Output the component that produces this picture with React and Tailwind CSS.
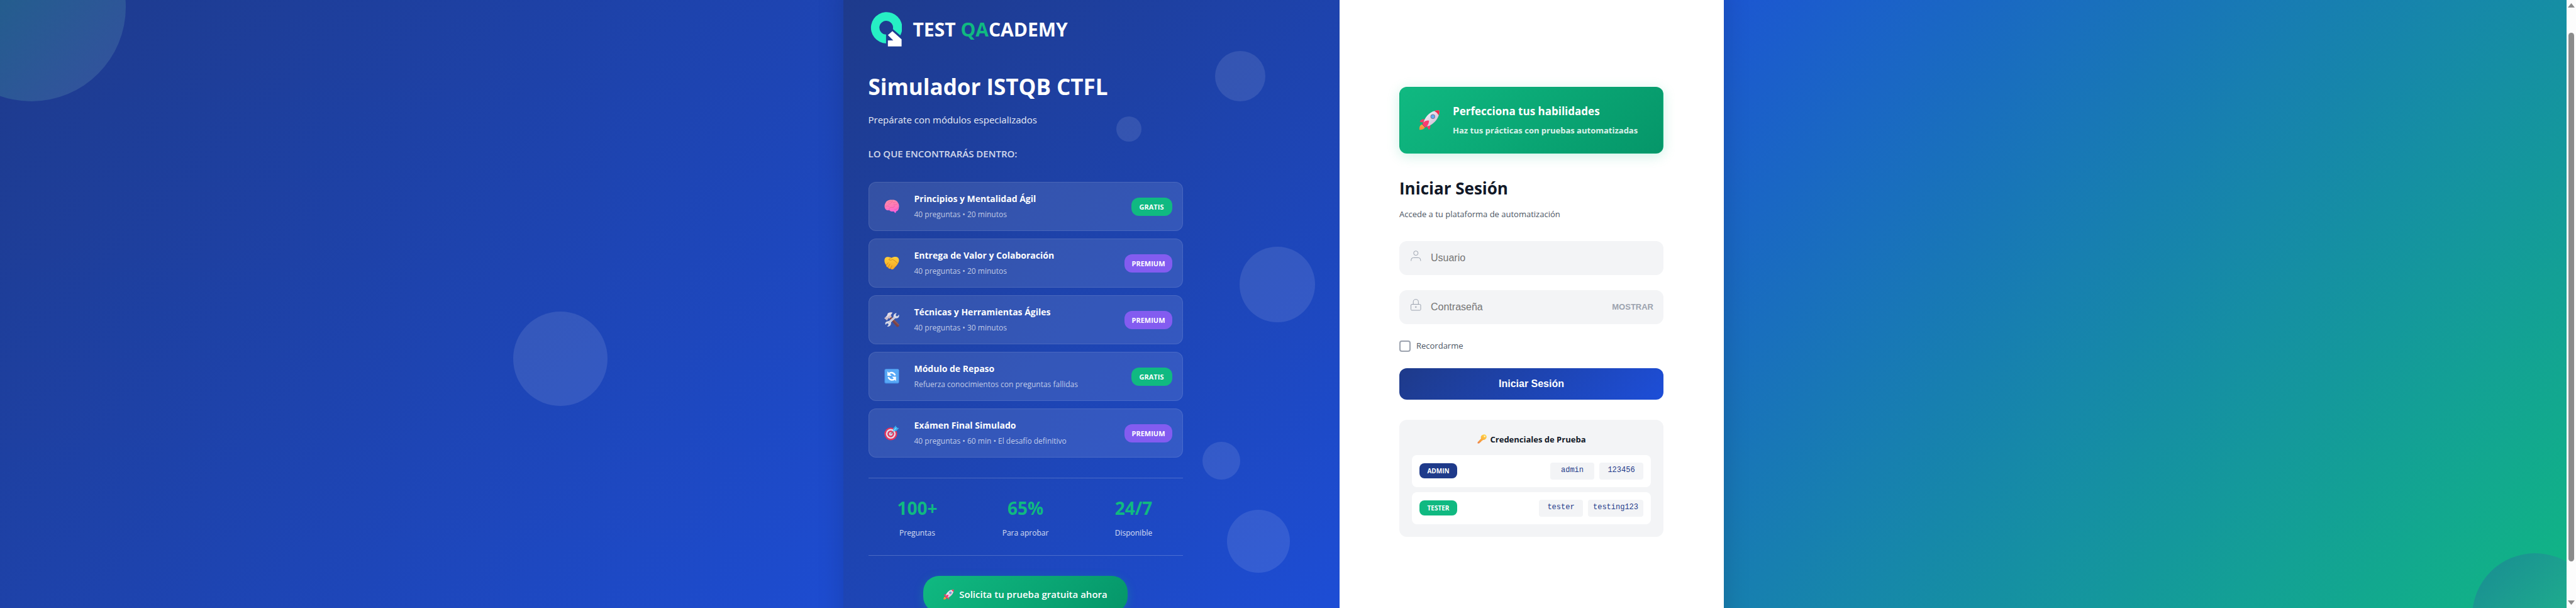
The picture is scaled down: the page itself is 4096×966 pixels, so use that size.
function Logo() {
  return (
    <svg viewBox="29 28 187 207" className="h-[55px] w-[50px]" role="img" aria-label="Test QAcademy">
      <path d="M122 216A93.500 93.500 0 1 1 207 168L163 131A41 41 0 1 0 122 163Z" fill="#26efc4" />
      <path d="M160 143L133 166L165 198H133V234H215V192Z" fill="#fff" />
    </svg>
  );
}

function Rocket({ className }) {
  return (
    <svg viewBox="62 60 126 124" className={className} aria-hidden="true">
      <defs>
        <linearGradient id="rocketBody" x1="0" y1="0" x2="1" y2="1">
          <stop offset="0.2" stopColor="#f1edf5" />
          <stop offset="1" stopColor="#c9b4cf" />
        </linearGradient>
        <linearGradient id="rocketFlame" x1="0" y1="0" x2="0" y2="1">
          <stop offset="0" stopColor="#ffa63c" />
          <stop offset="1" stopColor="#f58a3c" />
        </linearGradient>
      </defs>
      <path d="M82 148C70 152 62 162 65 181C80 182 92 178 99 164Z" fill="url(#rocketFlame)" />
      <path d="M96 118C84 116 72 122 66 132L86 139Z" fill="#f23a66" />
      <path d="M129 150C132 162 130 174 122 182L110 162Z" fill="#f2386a" />
      <path d="M80 147L101 169L108 160L90 140Z" fill="#4a3f8f" />
      <path d="M88 141C96 108 122 76 156 68C172 64 184 64 184 68C186 98 164 134 133 152C124 158 114 160 106 160Z" fill="url(#rocketBody)" />
      <path d="M153 69C168 64 183 62 184 68C185 78 183 86 179 95C174 82 166 74 153 69Z" fill="#ee2a4a" />
      <path d="M83 147C88 132 104 124 122 126C123 140 114 158 102 168Z" fill="#fb3a70" />
      <circle cx="145" cy="102" r="14" fill="#7d7f9c" />
      <circle cx="145" cy="102" r="9.500" fill="#58aefc" />
    </svg>
  );
}

function Key({ className }) {
  return (
    <svg viewBox="0 0 40 40" className={className} aria-hidden="true">
      <defs>
        <linearGradient id="keyGold" x1="0.800" y1="0" x2="0.200" y2="1">
          <stop offset="0" stopColor="#ffd84a" />
          <stop offset="0.500" stopColor="#fbb03c" />
          <stop offset="1" stopColor="#f0874a" />
        </linearGradient>
      </defs>
      <path
        fillRule="evenodd"
        d="M26 1C35 -1 41 6 39 14C37 21 30 25 24 24L20 28L17 29L15 33L12 34L9 38L2 39L1 34L16 18C13 10 17 2 26 1ZM31 6A3 3 0 1 0 31.010 6Z"
        fill="url(#keyGold)"
      />
    </svg>
  );
}

function Brain() {
  return (
    <svg viewBox="50 21 90 90" className="size-6" aria-hidden="true">
      <defs>
        <linearGradient id="brainPink" x1="0.300" y1="0" x2="0.500" y2="1">
          <stop offset="0" stopColor="#ff8fa6" />
          <stop offset="0.600" stopColor="#ff74bd" />
          <stop offset="1" stopColor="#f85fe0" />
        </linearGradient>
      </defs>
      <path
        d="M58 45C62 33 78 26 95 27C112 25 127 33 132 44C139 52 139 66 137 74C136 85 130 93 121 95L118 105L112 103L108 96C96 97 84 97 80 88C70 92 58 86 56 79C50 72 51 52 58 45Z"
        fill="url(#brainPink)"
      />
      <path
        d="M58 66C68 60 74 62 80 68M72 44C78 34 88 34 94 40M98 32C96 44 108 46 116 42M106 54C116 58 126 56 131 48M80 88C76 78 84 70 96 72C106 74 112 68 110 62M112 84C120 86 130 80 132 72M94 40C90 50 82 54 76 52"
        fill="none"
        stroke="#e0559a"
        strokeWidth="2"
        strokeLinecap="round"
      />
    </svg>
  );
}

function Handshake() {
  return (
    <svg viewBox="50 361 90 90" className="size-6" aria-hidden="true">
      <defs>
        <linearGradient id="handGold" x1="0.500" y1="0" x2="0.500" y2="1">
          <stop offset="0" stopColor="#ffcf3a" />
          <stop offset="1" stopColor="#f5a623" />
        </linearGradient>
      </defs>
      <path
        d="M54 378C58 369 70 369 78 370C86 370 92 374 96 374C104 368 126 365 134 376C141 386 138 400 132 408C126 420 116 428 108 438C102 446 92 445 88 439C80 441 74 437 73 431C66 431 61 426 62 419C52 408 48 390 54 378Z"
        fill="url(#handGold)"
      />
      <path
        d="M96 374C86 376 76 382 78 386C84 390 94 388 100 385C110 388 120 398 128 406M62 418L74 404M73 430L84 412M88 438L96 422"
        fill="none"
        stroke="#c97a14"
        strokeWidth="3"
        strokeLinecap="round"
      />
    </svg>
  );
}

function Tools() {
  return (
    <svg viewBox="48 691 90 90" className="size-6" aria-hidden="true">
      <path d="M78 727L90 718L137 766C138 774 132 780 124 779Z" fill="#7a4248" />
      <path d="M84 722L90 718L137 766L134 771Z" fill="#95584f" />
      <path d="M70 698C78 692 90 692 97 694L88 708L92 718L78 729L74 726L64 741L48 727C52 722 58 718 64 714Z" fill="#c9bccb" />
      <path d="M70 698C78 692 90 692 97 694L88 704L64 722L56 719L64 713Z" fill="#e3dbe6" />
      <path
        d="M122 697L116 708L120 715L128 714L135 705C140 718 132 728 118 728C114 728 112 728 110 730L88 752C90 764 84 777 68 777L66 775L74 766L72 759L64 758L56 766C50 754 58 745 72 744C74 744 77 744 79 742L103 720C102 708 108 697 122 697Z"
        fill="#d8dbe8"
      />
      <path d="M108 722L76 752" stroke="#b9b6cb" strokeWidth="4" strokeLinecap="round" />
    </svg>
  );
}

function Refresh() {
  return (
    <svg viewBox="50 1031 90 90" className="size-6" aria-hidden="true">
      <rect x="51" y="1032" width="87" height="87" rx="8" fill="#3f86e0" />
      <rect x="55" y="1033" width="82" height="81" rx="6" fill="#58a9f6" />
      <g fill="none" stroke="#fff" strokeWidth="9">
        <path d="M78 1060C90 1049 108 1053 115 1070" />
        <path d="M112 1091C100 1102 82 1098 74 1081" />
      </g>
      <path d="M69 1046V1072H94Z" fill="#fff" />
      <path d="M120 1104V1078H96Z" fill="#fff" />
    </svg>
  );
}

function Target() {
  return (
    <svg viewBox="50 1367 90 90" className="size-6" aria-hidden="true">
      <circle cx="89" cy="1417" r="38" fill="#e5345c" />
      <circle cx="89" cy="1417" r="29" fill="#e3dbea" />
      <circle cx="89" cy="1417" r="20" fill="#e5345c" />
      <circle cx="89" cy="1417" r="11" fill="#d9cfe0" />
      <path d="M90 1416L116 1390" stroke="#7d7894" strokeWidth="5" strokeLinecap="round" />
      <path d="M103 1402L104 1384L119 1367L123 1379L138 1383L122 1400Z" fill="#35aef0" />
      <path d="M103 1402L123 1379" stroke="#8bdcff" strokeWidth="4" />
    </svg>
  );
}

const modules = [
  { icon: Brain, title: "Principios y Mentalidad Ágil", detail: "40 preguntas • 20 minutos", plan: "GRATIS" },
  { icon: Handshake, title: "Entrega de Valor y Colaboración", detail: "40 preguntas • 20 minutos", plan: "PREMIUM" },
  { icon: Tools, title: "Técnicas y Herramientas Ágiles", detail: "40 preguntas • 30 minutos", plan: "PREMIUM" },
  { icon: Refresh, title: "Módulo de Repaso", detail: "Refuerza conocimientos con preguntas fallidas", plan: "GRATIS" },
  { icon: Target, title: "Exámen Final Simulado", detail: "40 preguntas • 60 min • El desafío definitivo", plan: "PREMIUM" },
];

const stats = [
  { value: "100+", label: "Preguntas" },
  { value: "65%", label: "Para aprobar" },
  { value: "24/7", label: "Disponible" },
];

const credentials = [
  { role: "ADMIN", tone: "bg-[#1e3a8a]", user: "admin", pass: "123456" },
  { role: "TESTER", tone: "bg-[#10b981]", user: "tester", pass: "testing123" },
];

function ModuleCard({ icon: Icon, title, detail, plan }) {
  return (
    <li className="flex items-center gap-4 rounded-xl border border-white/10 bg-white/10 px-4 py-[15px]">
      <span className="flex w-10 justify-center">
        <Icon />
      </span>
      <div className="flex-1">
        <h3 className="text-sm leading-[22px] font-bold">{title}</h3>
        <p className="mt-1 text-xs leading-5 text-white/70">{detail}</p>
      </div>
      <span
        className={
          plan === "GRATIS"
            ? "min-w-[65px] rounded-xl bg-[#10b981] px-[11px] py-1 text-center text-[11px] leading-[21px] font-bold"
            : "min-w-[65px] rounded-xl bg-[#835cf0] px-[11px] py-1 text-center text-[11px] leading-[21px] font-bold"
        }
      >
        {plan}
      </span>
    </li>
  );
}

function PromoPanel() {
  return (
    <section className="relative overflow-hidden bg-linear-[135deg,#1e3a8a,#1d4ed8] p-10 text-white">
      <div className="absolute top-[120px] right-[118px] size-20 rounded-full bg-white/10" />
      <div className="absolute top-[224px] right-[315px] size-10 rounded-full bg-white/10" />
      <div className="absolute top-[431px] right-[39px] size-[120px] rounded-full bg-white/10" />
      <div className="absolute top-[741px] right-[158px] size-[60px] rounded-full bg-white/10" />
      <div className="absolute top-[849px] right-[79px] size-[100px] rounded-full bg-white/10" />

      <div className="relative max-w-[500px]">
        <div className="flex items-center gap-[18px] pt-[18px] pl-[3px]">
          <Logo />
          <span className="text-[30px] leading-9 font-bold">
            TEST <span className="text-[#10b981]">QA</span>CADEMY
          </span>
        </div>
        <h1 className="mt-[43px] text-[35px] leading-[42px] font-bold">Simulador ISTQB CTFL</h1>
        <p className="mt-[19px] text-[15px] leading-6 text-white/90">Prepárate con módulos especializados</p>
        <h2 className="mt-8 text-[15px] leading-5 font-semibold text-white/80">LO QUE ENCONTRARÁS DENTRO:</h2>

        <ul className="mt-[35px] flex flex-col gap-3">
          {modules.map((m) => (
            <ModuleCard key={m.title} {...m} />
          ))}
        </ul>

        <dl className="mt-8 grid grid-cols-3 gap-4 border-y border-white/20 pt-[30px] pb-[25px] text-center">
          {stats.map((s) => (
            <div key={s.label} className="flex flex-col-reverse gap-[13px]">
              <dt className="text-xs leading-5 text-white/80">{s.label}</dt>
              <dd className="text-[28px] leading-[34px] font-bold text-[#10b981]">{s.value}</dd>
            </div>
          ))}
        </dl>

        <div className="mt-8 flex justify-center">
          <a
            href="#prueba"
            className="flex items-center gap-2 rounded-[25px] bg-linear-[135deg,#10b981,#059669] px-8 py-[18px] text-[15px] leading-[22px] font-semibold shadow-[0_4px_15px_rgba(16,185,129,0.3)]"
          >
            <Rocket className="size-[17px]" />
            Solicita tu prueba gratuita ahora
          </a>
        </div>
      </div>
    </section>
  );
}

function LoginPanel() {
  return (
    <section className="flex flex-col items-center justify-center bg-white">
      <div className="w-full max-w-[420px]">
        <div className="flex items-center gap-5 rounded-xl border border-[#10b981]/20 bg-linear-[135deg,#10b981,#059669] py-[25px] pr-6 pl-[30px] text-white shadow-[0_4px_20px_rgba(16,185,129,0.2)]">
          <Rocket className="h-[33px] w-[34px]" />
          <div>
            <p className="text-[17px] leading-[26px] font-bold">Perfecciona tus habilidades</p>
            <p className="mt-[6px] text-[13px] leading-[22px] font-bold text-white/85">
              Haz tus prácticas con pruebas automatizadas
            </p>
          </div>
        </div>

        <h2 className="mt-[37px] text-[26px] leading-9 font-bold text-[#111827]">Iniciar Sesión</h2>
        <p className="mt-3 text-[13px] leading-[22px] text-[#4b5563]">Accede a tu plataforma de automatización</p>

        <form className="mt-8" onSubmit={(e) => e.preventDefault()}>
          <div className="relative">
            <svg viewBox="0 0 20 20" className="absolute top-[14px] left-4 size-5" fill="none" stroke="#9ca3af" aria-hidden="true">
              <circle cx="10.300" cy="5.200" r="3.500" />
              <path d="M2.800 17.600V16A3.600 3.600 0 0 1 6.400 12.400H14.200A3.600 3.600 0 0 1 17.800 16V17.600" />
            </svg>
            <input
              type="text"
              aria-label="Usuario"
              placeholder="Usuario"
              className="h-[54px] w-full rounded-xl bg-[#f3f4f6] pr-4 pl-[50px] font-['Liberation_Sans',sans-serif] text-base placeholder:text-[#757575]"
            />
          </div>
          <div className="relative mt-6">
            <svg viewBox="0 0 20 20" className="absolute top-[14px] left-4 size-5" fill="none" stroke="#9ca3af" aria-hidden="true">
              <rect x="2.500" y="8.500" width="15.500" height="9.500" rx="1.500" />
              <path d="M6.200 8.500V4.700A4.050 4.050 0 0 1 14.300 4.700V8.500" />
              <circle cx="10.300" cy="12.800" r="0.900" />
            </svg>
            <input
              type="password"
              aria-label="Contraseña"
              placeholder="Contraseña"
              className="h-[54px] w-full rounded-xl bg-[#f3f4f6] pr-24 pl-[50px] font-['Liberation_Sans',sans-serif] text-base placeholder:text-[#757575]"
            />
            <button
              type="button"
              className="absolute inset-y-0 right-4 font-['Liberation_Sans',sans-serif] text-[13px] font-bold text-[#9ca3af]"
            >
              MOSTRAR
            </button>
          </div>
          <label className="mt-[25px] flex h-5 items-center gap-[9px] text-[13px] text-[#4b5563]">
            <input type="checkbox" className="size-[18px] appearance-none rounded-sm border-2 border-[#9ca3af] bg-white" />
            Recordarme
          </label>
          <button
            type="submit"
            className="mt-[25px] h-[50px] w-full rounded-xl bg-linear-[135deg,#1e3a8a,#1d4ed8] font-['Liberation_Sans',sans-serif] text-base font-bold text-white"
          >
            Iniciar Sesión
          </button>
        </form>

        <div className="mt-8 rounded-xl bg-[#f3f4f6] p-5">
          <h3 className="flex items-center justify-center gap-[6px] text-[13px] leading-[22px] font-bold text-[#111827]">
            <Key className="size-[15px]" />
            Credenciales de Prueba
          </h3>
          <ul className="mt-[14px] flex flex-col gap-2">
            {credentials.map((c) => (
              <li key={c.role} className="flex items-center gap-2 rounded-lg bg-white p-3">
                <span
                  className={`${c.tone} mr-auto min-w-[60px] rounded-lg px-2 text-center text-[10px] leading-6 font-bold text-white`}
                >
                  {c.role}
                </span>
                {[c.user, c.pass].map((value) => (
                  <code
                    key={value}
                    className="min-w-[70px] rounded bg-[#f3f4f6] px-2 pb-[3px] text-center font-['Liberation_Mono',monospace] text-xs leading-6 text-[#1e3a8a]"
                  >
                    {value}
                  </code>
                ))}
              </li>
            ))}
          </ul>
        </div>
      </div>
    </section>
  );
}

function ScrollBar() {
  return (
    <div className="flex w-[15px] shrink-0 flex-col items-center bg-[#fcfcfc] py-[5px]" aria-hidden="true">
      <svg viewBox="0 0 11 7" className="h-[7px] w-[11px] fill-[#8b8b8b]">
        <path d="M5.500 0L11 7H0Z" />
      </svg>
      <div className="flex w-[9px] flex-1 flex-col">
        <div className="grow-40" />
        <div className="grow-840 rounded-full bg-[#8b8b8b]" />
        <div className="grow-62" />
      </div>
      <svg viewBox="0 0 11 7" className="h-[7px] w-[11px] fill-[#8b8b8b]">
        <path d="M0 0H11L5.500 7Z" />
      </svg>
    </div>
  );
}

export default function App() {
  return (
    <div className="flex h-screen overflow-hidden font-['Open_Sans',sans-serif]">
      <div className="flex-1 overflow-hidden">
        <main className="relative -mt-[39px] flex min-h-[1068px] justify-center overflow-hidden bg-linear-[135deg,#1e3a8a_0%,#1d4ed8_50%,#10b981_100%]">
          <div className="absolute -top-[100px] -left-[100px] size-[300px] rounded-full bg-linear-[135deg,rgba(16,185,129,0.35),rgba(255,255,255,0.1)]" />
          <div className="absolute top-1/2 left-1/5 size-[150px] rounded-full bg-white/10" />
          <div className="absolute -right-[50px] -bottom-[50px] size-[200px] rounded-full bg-linear-[135deg,rgba(37,78,160,0.35),rgba(255,255,255,0.08)]" />
          <div className="relative grid w-full max-w-[1400px] grid-cols-[789fr_611fr] shadow-[0_20px_40px_rgba(0,0,0,0.15)]">
            <PromoPanel />
            <LoginPanel />
          </div>
        </main>
      </div>
      <ScrollBar />
    </div>
  );
}
